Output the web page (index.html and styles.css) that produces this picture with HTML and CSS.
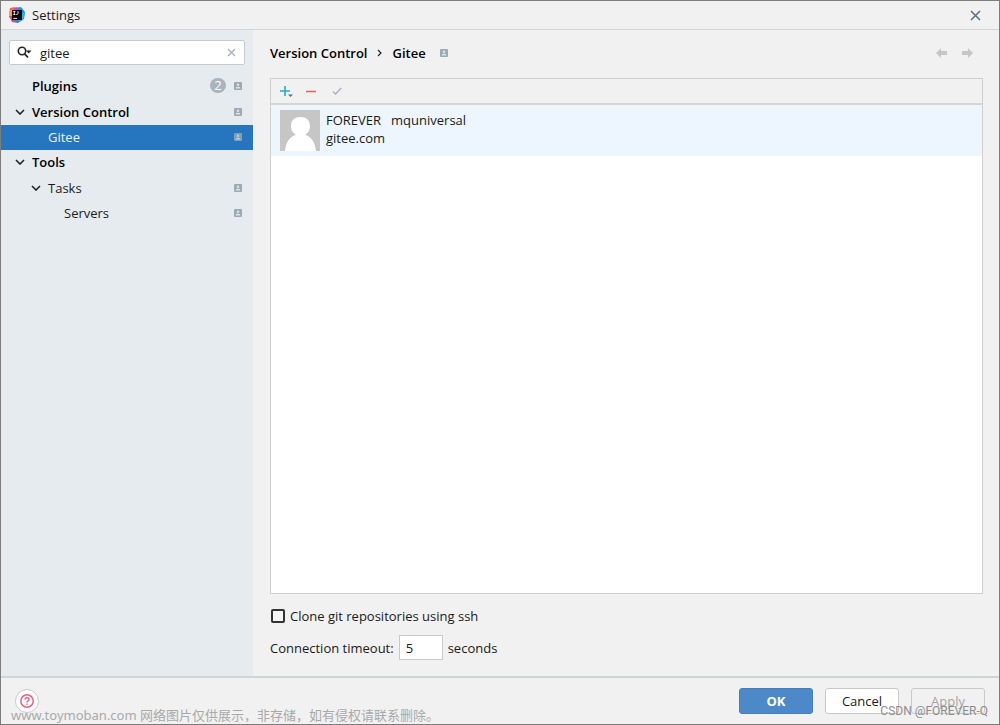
FILE: index.html
```html
<!DOCTYPE html>
<html lang="en">
<head>
<meta charset="utf-8">
<title>Settings</title>
<link rel="stylesheet" href="styles.css">
</head>
<body>
<svg class="defs" width="0" height="0" aria-hidden="true">
  <symbol id="badge" viewBox="0 0 8 8">
    <rect width="8" height="8" rx="1" fill="#9aaab3"/>
    <circle cx="4" cy="2.700" r="1.300" fill="#dde4e8"/>
    <path d="M1.700 6.600V5.900Q1.700 4.700 4 4.700T6.300 5.900V6.600Z" fill="#dde4e8"/>
  </symbol>
  <symbol id="chevron" viewBox="0 0 10 6">
    <path d="M1 1L5 5L9 1" fill="none" stroke="#222" stroke-width="1.6"/>
  </symbol>
</svg>
<div class="window">
  <header class="titlebar">
    <svg class="logo" viewBox="0 0 16 16" aria-hidden="true">
      <path d="M1 1L6 0L9 4L5 13L0 10Z" fill="#f8654f"/>
      <path d="M0 9L4 7L9 16L3 15Z" fill="#e8457e"/>
      <path d="M0 4L3 3V9L0 9Z" fill="#fba13d"/>
      <path d="M6 1L12 0L16 5L15 12L9 16L5 14Z" fill="#1b8cf0"/>
      <path d="M5 2L8 0L10 3L6 5Z" fill="#c750b8"/>
      <path d="M12 5L16 6L14 13L10 15Z" fill="#27b5f3"/>
      <rect x="3" y="3" width="10" height="10" fill="#0b0508"/>
      <path d="M4.300 4.500H6.400M5.300 4.500V7.500M4.300 7.500H6.400M9 4.200V6.500Q9 7.500 7.200 7.400M4.300 11.400H8" fill="none" stroke="#fff" stroke-width=".9"/>
    </svg>
    <h1 class="title">Settings</h1>
    <button class="icon-button" aria-label="Close">
      <svg width="11" height="11" viewBox="0 0 11 11"><path d="M1 1L10 10M10 1L1 10" stroke="#56707d" stroke-width="1.5"/></svg>
    </button>
  </header>
  <div class="body">
    <aside class="sidebar">
      <div class="search">
        <svg width="15" height="13" viewBox="0 0 15 13" aria-hidden="true"><circle cx="5" cy="5" r="3.700" fill="none" stroke="#222" stroke-width="1.6"/><path d="M7.600 7.800L11 11.500" stroke="#222" stroke-width="1.8"/><path d="M9 4.500H14.500L11.700 7.500Z" fill="#222"/></svg>
        <input class="search-input" type="text" value="gitee" aria-label="Search settings">
        <button class="icon-button" aria-label="Clear search">
          <svg width="9" height="9" viewBox="0 0 9 9"><path d="M1 1L8 8M8 1L1 8" stroke="#a3b0b7" stroke-width="1.2"/></svg>
        </button>
      </div>
      <nav class="tree">
        <a class="row tall strong" href="#plugins"><span class="arrow"></span><span class="name">Plugins</span><span class="count">2</span><svg class="badge"><use href="#badge"/></svg></a>
        <a class="row tall strong" href="#vcs"><svg class="arrow"><use href="#chevron"/></svg><span class="name">Version Control</span><svg class="badge"><use href="#badge"/></svg></a>
        <a class="row level2 selected" href="#gitee"><span class="arrow"></span><span class="name">Gitee</span><svg class="badge"><use href="#badge"/></svg></a>
        <a class="row strong" href="#tools"><svg class="arrow"><use href="#chevron"/></svg><span class="name">Tools</span></a>
        <a class="row tall level2" href="#tasks"><svg class="arrow"><use href="#chevron"/></svg><span class="name">Tasks</span><svg class="badge"><use href="#badge"/></svg></a>
        <a class="row level3" href="#servers"><span class="arrow"></span><span class="name">Servers</span><svg class="badge"><use href="#badge"/></svg></a>
      </nav>
    </aside>
    <main class="content">
      <div class="crumbs">
        <span>Version Control</span>
        <svg width="5" height="8" viewBox="0 0 5 8" aria-hidden="true"><path d="M1 1L4 4L1 7" fill="none" stroke="#222" stroke-width="1.2"/></svg>
        <span>Gitee</span>
        <svg class="badge crumb-badge"><use href="#badge"/></svg>
        <div class="history">
          <button class="icon-button" aria-label="Back"><svg width="11" height="10" viewBox="0 0 11 10"><path d="M0 5L5 0V3H11V7H5V10Z" fill="#c6c6c6"/></svg></button>
          <button class="icon-button" aria-label="Forward"><svg width="11" height="10" viewBox="0 0 11 10"><path d="M11 5L6 0V3H0V7H6V10Z" fill="#c6c6c6"/></svg></button>
        </div>
      </div>
      <section class="accounts">
        <div class="toolbar">
          <button class="icon-button" aria-label="Add account"><svg width="14" height="12" viewBox="0 0 14 12"><path d="M5 1V11M0 6H10" stroke="#1fb0c0" stroke-width="1.6"/><path d="M8 9.500H13L10.500 12Z" fill="#5b707b"/></svg></button>
          <button class="icon-button" aria-label="Remove account"><svg width="10" height="12" viewBox="0 0 10 12"><path d="M0 6.500H10" stroke="#f0625f" stroke-width="1.6"/></svg></button>
          <button class="icon-button check" aria-label="Set default"><svg width="10" height="12" viewBox="0 0 10 12"><path d="M1 6.500L3.500 9L9.300 3" fill="none" stroke="#a9b5bb" stroke-width="1.5"/></svg></button>
        </div>
        <div class="account">
          <svg class="avatar" viewBox="0 0 40 41" aria-hidden="true"><rect width="40" height="41" fill="#c6c6c6"/><path d="M5 41C6 32 10 26 16 25Q11 22 11 16C11 10 15 7 20.500 7S30 10 30 16Q30 22 25 25C31 26 35 32 36 41Z" fill="#fff"/></svg>
          <div class="account-text">
            <div class="account-names"><span>FOREVER</span><span>mquniversal</span></div>
            <div>gitee.com</div>
          </div>
        </div>
      </section>
      <label class="clone"><input class="checkbox" type="checkbox">Clone git repositories using ssh</label>
      <div class="timeout">
        <label for="timeout">Connection timeout:</label>
        <input class="timeout-input" id="timeout" type="text" value="5">
        <span>seconds</span>
      </div>
    </main>
  </div>
  <footer class="footer">
    <button class="help" aria-label="Help"><svg width="14" height="14" viewBox="0 0 14 14"><circle cx="7" cy="7" r="6.200" fill="none" stroke="#f25f7c" stroke-width="1.5"/><path d="M5 5.600Q5 3.700 7 3.700T9 5.400Q9 6.300 8 6.900Q7 7.400 7 8.500M7 9.500V10.700" fill="none" stroke="#f25f7c" stroke-width="1.4"/></svg></button>
    <button class="button primary">OK</button>
    <button class="button">Cancel</button>
    <button class="button disabled" disabled>Apply</button>
  </footer>
  <div class="notice">www.toymoban.com <span class="notice-cjk" lang="zh-CN">网络图片仅供展示，非存储，如有侵权请联系删除。</span></div>
  <div class="credit">CSDN @FOREVER-Q</div>
</div>
</body>
</html>
```
FILE: styles.css
```css
* {
  box-sizing: border-box;
}

body {
  margin: 0;
  color: #1a1a1a;
  font: 13px/18px "Open Sans", "Noto Sans CJK SC", sans-serif;
}

button,
input {
  font: inherit;
  color: inherit;
}

.defs {
  position: absolute;
}

.window {
  position: relative;
  display: flex;
  flex-direction: column;
  min-height: 100vh;
  border: 1px solid #7d7d7d;
  background: #f1f1f1;
}

.titlebar {
  display: flex;
  align-items: center;
  height: 29px;
  padding: 0 18px 0 8px;
  border-bottom: 1px solid #d3d5d6;
}

.logo {
  width: 16px;
  height: 16px;
}

.title {
  flex: 1;
  margin: 0 0 0 7px;
  font-size: 13px;
  font-weight: 400;
}

.icon-button {
  display: flex;
  padding: 0;
  border: 0;
  background: none;
}

.body {
  display: flex;
  flex: 1;
}

.sidebar {
  width: 252px;
  background: #e6ebef;
}

.search {
  display: flex;
  align-items: center;
  height: 25px;
  margin: 10px 8px 8px;
  padding: 0 8px 0 7px;
  border: 1px solid #c6cbce;
  border-radius: 2px;
  background: #fff;
}

.search-input {
  flex: 1;
  min-width: 0;
  padding: 0;
  margin-left: 8px;
  border: 0;
  outline: 0;
  background: none;
}

.row {
  display: flex;
  align-items: center;
  height: 25px;
  padding: 0 11px 1px 14px;
  color: inherit;
  text-decoration: none;
}

.tall {
  height: 26px;
}

.strong {
  color: #000;
  font-weight: 600;
}

.level2 {
  padding-left: 30px;
}

.level3 {
  padding-left: 46px;
}

.selected {
  background: #2675bf;
  color: #e9f1f8;
}

.arrow {
  width: 10px;
  height: 6px;
  margin-right: 7px;
}

.name {
  flex: 1;
}

.count {
  width: 16px;
  height: 15px;
  margin-right: 8px;
  border-radius: 8px;
  background: #a9b4bc;
  color: #fff;
  font-weight: 400;
  line-height: 15px;
  text-align: center;
}

.badge {
  width: 8px;
  height: 8px;
}

.selected .badge {
  opacity: .8;
}

.content {
  display: flex;
  flex: 1;
  flex-direction: column;
  padding: 14px 16px 16px 17px;
}

.crumbs {
  display: flex;
  align-items: center;
  gap: 10px;
  height: 18px;
  color: #000;
  font-weight: 600;
}

.crumb-badge {
  margin-left: 4px;
}

.history {
  display: flex;
  gap: 15px;
  margin-left: auto;
  margin-right: 10px;
}

.accounts {
  flex: 1;
  margin-top: 16px;
  border: 1px solid #d0d0d0;
  background: #fff;
}

.toolbar {
  display: flex;
  align-items: center;
  gap: 12px;
  height: 26px;
  padding-left: 9px;
  border-bottom: 2px solid #d6d6d6;
  background: #f1f1f1;
}

.check {
  margin-left: 4px;
}

.account {
  display: flex;
  gap: 6px;
  height: 51px;
  padding: 5px 9px;
  background: #edf6fe;
}

.avatar {
  width: 40px;
  height: 41px;
}

.account-text {
  padding-top: 1px;
}

.account-names {
  display: flex;
  gap: 10px;
}

.clone {
  display: flex;
  align-items: center;
  gap: 4px;
  margin-top: 13px;
}

.checkbox {
  width: 14px;
  height: 14px;
  margin: 0 1px;
  border: 2px solid #333;
  border-radius: 2px;
  background: #f5f5f5;
  appearance: none;
}

.timeout {
  display: flex;
  align-items: center;
  gap: 5px;
  margin-top: 10px;
}

.timeout-input {
  width: 44px;
  height: 25px;
  padding: 0 6px;
  border: 1px solid #c9c9c9;
  background: #fff;
}

.footer {
  display: flex;
  align-items: center;
  gap: 12px;
  height: 48px;
  padding: 0 14px;
  border-top: 2px solid #d1d4d5;
}

.help {
  display: flex;
  align-items: center;
  justify-content: center;
  width: 24px;
  height: 24px;
  margin-right: auto;
  padding: 0;
  border: 1px solid #c9c9c9;
  border-radius: 50%;
  background: #fff;
}

.button {
  width: 74px;
  height: 26px;
  padding: 0;
  border: 1px solid #c9c9c9;
  border-radius: 3px;
  background: #fff;
}

.primary {
  border-color: #4480bd;
  background: #4d89c9;
  color: #fff;
  font-weight: 700;
}

.disabled {
  background: #f1f1f1;
  color: #a5a5a5;
}

.notice {
  position: absolute;
  left: 10px;
  bottom: 0;
  color: #a9a9a9;
  font: 13px/17px "Noto Sans", "Noto Sans CJK SC", sans-serif;
  white-space: nowrap;
}

.notice-cjk {
  font-family: "Noto Sans CJK SC", sans-serif;
}

.credit {
  position: absolute;
  right: 11px;
  bottom: 5px;
  color: #8c8c8c;
  font: 12px/16px Roboto, "Liberation Sans", sans-serif;
}
```
